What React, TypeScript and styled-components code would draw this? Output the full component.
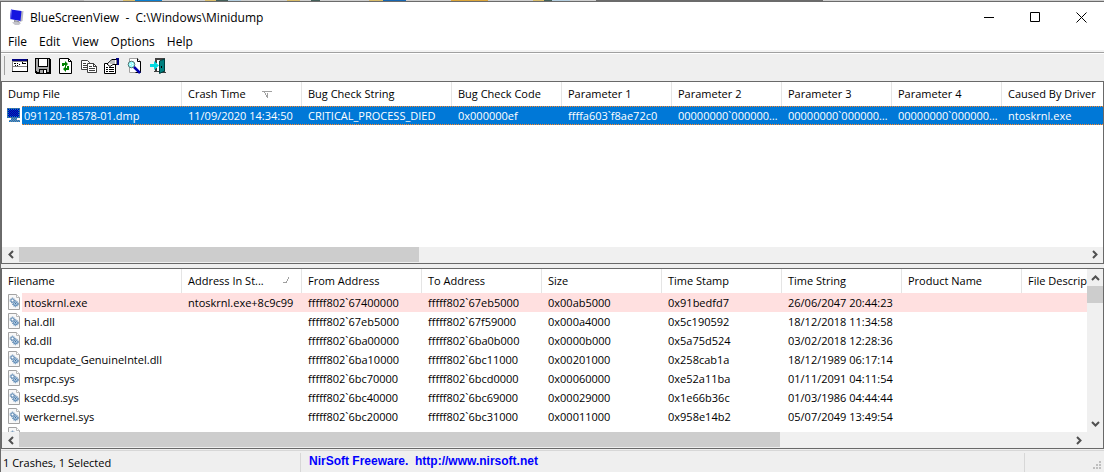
import React from "react";
import styled, { createGlobalStyle, css } from "styled-components";

const GlobalStyle = createGlobalStyle`
  * { box-sizing: border-box; }
  html, body { margin: 0; height: 100%; overflow: hidden; }
  #root { height: 100%; }
  body, button { font-family: "Open Sans", "Liberation Sans", sans-serif; font-size: 11px; color: #000; }
  button { border: 0; padding: 0; background: none; }
`;

const Desktop = styled.div`
  display: flex;
  flex-direction: column;
  height: 100vh;
  padding-left: 1px;
  background: #6b6b6b;
`;

const DesktopEdge = styled.div`
  flex: none;
  height: 2px;
  margin-left: -1px;
  border-bottom: 1px solid #6b6b6b;
  background: linear-gradient(to right,
    #b8b8b8 84px, #cfcfcf 84px 123px, #d9bd6c 123px 135px, #0a7fd0 135px 162px,
    #cfcfcf 162px 205px, #d9bd6c 205px 216px, #44605a 216px 228px, #b5cfe0 228px 241px,
    #cfcfcf 241px 287px, #d9bd6c 287px 300px, #cfcfcf 300px 311px, #44605a 311px 320px,
    #cfcfcf 320px 369px, #d9bd6c 369px 383px, #1766b0 383px 406px,
    #cfcfcf 406px 451px, #dca63a 451px 488px,
    #cfcfcf 488px 533px, #d9bd6c 533px 544px, #44605a 544px 552px, #b5cfe0 552px 570px,
    #cfcfcf 570px 596px, #6b6b6b 596px 823px, #cfcfcf 823px);
`;

const Window = styled.main`
  flex: 1;
  min-height: 0;
  display: flex;
  flex-direction: column;
  background: #efefef;
`;

const TitleBar = styled.header`
  display: flex;
  align-items: center;
  height: 30px;
  padding-left: 8px;
  background: #fff;
`;

const Title = styled.h1`
  flex: 1;
  margin: 0 0 0 4px;
  font-size: 12px;
  font-weight: 400;
  white-space: pre;
`;

const WindowButton = styled.button`
  display: flex;
  align-items: center;
  justify-content: center;
  width: 46px;
  height: 30px;
`;

const MenuBar = styled.nav`
  display: flex;
  align-items: flex-start;
  height: 20px;
  padding-left: 1px;
  border-bottom: 2px solid #f3f3f3;
  background: #fff;
`;

const MenuItem = styled.button`
  height: 20px;
  padding: 0 6px;
  font-size: 12px;
  line-height: 20px;
`;

const ToolBar = styled.div`
  display: flex;
  align-items: center;
  gap: 7px;
  height: 29px;
  padding: 0 0 3px 3px;
  border-top: 1px solid #a0a0a0;
  box-shadow: inset 0 1px #fff;
`;

const Grip = styled.span`
  width: 1px;
  height: 19px;
  background: #a0a0a0;
`;

const ToolButton = styled.button`
  width: 16px;
  height: 16px;
  svg { display: block; }
`;

const Pane = styled.section<{ $share: number }>`
  flex: ${(p) => p.$share} 1 0;
  min-height: 0;
  display: grid;
  grid-template-columns: minmax(0, 1fr) auto;
  grid-template-rows: minmax(0, 1fr) 16px;
  border: 1px solid #696969;
  background: #fff;
`;

const Splitter = styled.div`
  height: 4px;
`;

const ListView = styled.div`
  min-width: 0;
  overflow: hidden;
`;

const Table = styled.table`
  width: 100%;
  table-layout: fixed;
  border-collapse: separate;
  border-spacing: 0;
`;

const HeadCell = styled.th`
  height: 24px;
  padding: 0 6px;
  overflow: hidden;
  border-right: 1px solid #e5e5e5;
  font-weight: 400;
  text-align: left;
  white-space: nowrap;
  &:last-child { border-right: 0; padding-right: 0; }
`;

const HeadLabel = styled.span`
  display: flex;
  align-items: center;
  gap: 16px;
  height: 16px;
  line-height: 16px;
`;

type Tone = "selected" | "culprit" | "plain";

const dots = "repeating-linear-gradient(to right, #ff8728 0 1px, #0078d7 1px 2px)";

const toneStyle = (tone: Tone) =>
  tone === "selected"
    ? css`
        background: ${dots} top / 100% 1px no-repeat, ${dots} bottom / 100% 1px no-repeat, #0078d7;
        color: #fff;
      `
    : css`
        background: ${tone === "culprit" ? "#ffe0e0" : "#fff"};
      `;

const Cell = styled.td<{ $tone: Tone }>`
  height: 19px;
  padding: 0 4px 0 6px;
  overflow: hidden;
  text-overflow: ellipsis;
  white-space: nowrap;
  line-height: 19px;
  ${(p) => toneStyle(p.$tone)}
`;

const NameCell = styled.td`
  height: 19px;
  padding: 0;
`;

const NameLayout = styled.div`
  display: flex;
`;

const NameIcon = styled.span`
  width: 20px;
  height: 19px;
  padding: 1px 0 0 5px;
  svg { display: block; }
`;

const NameText = styled.span<{ $tone: Tone }>`
  flex: 1;
  height: 19px;
  padding-left: 2px;
  line-height: 19px;
  white-space: nowrap;
  ${(p) => toneStyle(p.$tone)}
`;

const Bar = styled.div<{ $vertical?: boolean }>`
  display: flex;
  flex-direction: ${(p) => (p.$vertical ? "column" : "row")};
  width: ${(p) => (p.$vertical ? "16px" : "auto")};
  background: #f0f0f0;
`;

const ArrowButton = styled.button<{ $vertical?: boolean }>`
  flex: none;
  display: flex;
  align-items: center;
  justify-content: center;
  width: ${(p) => (p.$vertical ? "16px" : "17px")};
  height: ${(p) => (p.$vertical ? "17px" : "16px")};
`;

const Track = styled.div`
  flex: 1;
  display: flex;
`;

const Thumb = styled.div<{ $size: string; $vertical?: boolean }>`
  width: ${(p) => (p.$vertical ? "100%" : p.$size)};
  height: ${(p) => (p.$vertical ? p.$size : "15px")};
  background: #cdcdcd;
`;

const Corner = styled.div`
  background: #f0f0f0;
`;

const StatusBar = styled.footer`
  display: grid;
  grid-template-columns: 300px 1fr 79px;
  height: 23px;
  padding-top: 3px;
  border-top: 1px solid #efefef;
  box-shadow: inset 0 1px #d7d7d7;
`;

const StatusPart = styled.div`
  display: flex;
  align-items: center;
  padding-left: 2px;
  border-right: 1px solid #d7d7d7;
  &:last-child { border-right: 0; align-items: flex-end; justify-content: flex-end; }
`;

const NirSoftLink = styled.a`
  align-self: flex-start;
  padding-left: 6px;
  font: bold 12px/16px "Liberation Sans", sans-serif;
  color: #0000ff;
  text-decoration: none;
  white-space: pre;
`;

const arrowPaths = {
  left: "M8 2 4.500 5.500 8 9",
  right: "M4 2 7.500 5.500 4 9",
  up: "M2 8 5.500 4.500 9 8",
  down: "M2 4 5.500 7.500 9 4",
};

type Direction = keyof typeof arrowPaths;

const Arrow = ({ to }: { to: Direction }) => (
  <svg width="11" height="11" viewBox="0 0 11 11" fill="none" stroke="#505050" strokeWidth="2">
    <path d={arrowPaths[to]} />
  </svg>
);

const HorizontalBar = ({ size }: { size: string }) => (
  <Bar>
    <ArrowButton aria-label="Scroll left"><Arrow to="left" /></ArrowButton>
    <Track><Thumb $size={size} /></Track>
    <ArrowButton aria-label="Scroll right"><Arrow to="right" /></ArrowButton>
  </Bar>
);

const MonitorIcon = () => (
  <svg width="17" height="17" viewBox="0 0 17 17">
    <path d="M11.500 2.500 14.500 2 13.500 12 11 13Z" fill="#b9b9c2" />
    <path d="M2 .5 12.500 2 11.500 12 1 10Z" fill="#1414e0" />
    <path d="M2 .5 1 10 2 10.200 3 .7Z" fill="#6c6cec" />
    <path d="M5 11 10 12 11 14 5 14Z" fill="#92929a" />
    <path d="M3 13.500 7 12.500 12 14 10 16 6 16Z" fill="#c4c4cb" />
  </svg>
);

const DumpIcon = () => (
  <svg width="15" height="16" viewBox="0 0 15 16" shapeRendering="crispEdges">
    <defs>
      <pattern id="dither" width="2" height="2" patternUnits="userSpaceOnUse">
        <path d="M0 0h1v1H0zM1 1h1v1H1z" fill="#0078d7" />
      </pattern>
    </defs>
    <path d="M0 1h13v10H0z" fill="#6a6a78" />
    <path d="M1 2h11v8H1z" fill="#0000a8" />
    <path d="M4 11h6v2h3v2H2v-2h2z" fill="#8a8a90" />
    <path d="M0 1h13v10H10v2h3v2H2v-2h2v-2H0z" fill="url(#dither)" />
    <path d="M2 3h9v6H2z" fill="#0000a8" opacity=".6" />
  </svg>
);

const FileIcon = () => (
  <svg width="14" height="17" viewBox="0 0 14 17">
    <path d="M1.500 .5H9.500L12.500 3.500V15.500H1.500Z" fill="#f8f8f8" stroke="#a3a3a3" />
    <path d="M9.500 .5V3.500H12.500" fill="#fff" stroke="#b8b8b8" />
    <circle cx="5.500" cy="6.500" r="2.400" fill="none" stroke="#3e6f9f" strokeWidth="1" strokeDasharray="1 .9" />
    <circle cx="5.500" cy="6.500" r="1.500" fill="#fff" stroke="#4d7eae" strokeWidth="1" />
    <circle cx="8.500" cy="9.800" r="2.900" fill="#e4eef7" stroke="#3e6f9f" strokeWidth="1" strokeDasharray="1 .9" />
    <circle cx="8.500" cy="9.800" r="1.900" fill="#c6dbed" stroke="#4d7eae" strokeWidth="1" />
    <path d="M8 9.300h1v1H8z" fill="#1d4f85" />
  </svg>
);

const toolIcons: { label: string; art: React.ReactNode }[] = [
  {
    label: "Advanced options",
    art: (
      <>
        <path d="M0 1h16v13H0z" fill="#000" />
        <path d="M0 1h15v12H0z" fill="#808080" />
        <path d="M1 4h14v9H1z" fill="#fff" />
        <path d="M0 1h15v2H0z" fill="#000080" />
        <path d="M2 5h2v1H2zM5 5h1v1H5zM10 5h4v1h-4zM3 7h1v1H3zM5 7h1v1H5zM7 6h1v1H7zM10 4h1v1h-1z" fill="#000" />
        <path d="M1 8h14v1H1z" fill="#808080" />
      </>
    ),
  },
  {
    label: "Save selected items",
    art: (
      <>
        <path d="M0 0h15v1h1v15H1v-1H0z" fill="#000" />
        <path d="M1 1h2v8h10V1h1v13H2v-1H1z" fill="#a8a8a8" />
        <path d="M4 1h8v7H4z" fill="#fff" />
        <path d="M4 11h8v4H4z" fill="#000" />
        <path d="M5 12h3v3H5z" fill="#a8a8a8" />
        <path d="M9 12h2v3H9z" fill="#fff" />
      </>
    ),
  },
  {
    label: "Refresh",
    art: (
      <>
        <path d="M1.500 .5h9l3 3v12h-12z" fill="#fff" stroke="#000" />
        <path d="M10.500 .5v3h3" fill="none" stroke="#000" />
        <path d="M4 8V5h3V3l3 3-3 3V7H6v1zM11 8v4H8v2l-3-3 3-3v2h1V8z" fill="#008000" />
      </>
    ),
  },
  {
    label: "Copy selected items",
    art: (
      <>
        <path d="M.5 2.500h6l2 2v7h-8z" fill="#fff" stroke="#404040" />
        <path d="M2 5h3v1H2zM2 7h5v1H2zM2 9h4v1H2z" fill="#404040" />
        <path d="M6.500 5.500h6l3 3v6h-9z" fill="#fff" stroke="#404040" />
        <path d="M12 5h1v3h3v1h-4zM8 8h3v1H8zM8 10h6v1H8zM8 12h6v1H8z" fill="#404040" />
      </>
    ),
  },
  {
    label: "Properties",
    art: (
      <>
        <path d="M.5 5.500h11v10h-11z" fill="#fff" stroke="#000" />
        <path d="M2 9h2v1H2zM5 9h5v1H5zM2 11h2v1H2zM5 11h5v1H5zM2 13h2v1H2zM5 13h5v1H5z" fill="#000" />
        <path d="M3 6 8 1.500h5v5H9l-3 2z" fill="#fff" stroke="#000" />
        <path d="M6 5h5M7 3h4" stroke="#808080" />
        <path d="M12 0h3v7h-2V2h-1z" fill="#000080" />
      </>
    ),
  },
  {
    label: "Find",
    art: (
      <>
        <path d="M2.500 .5h8l3 3v11h-11z" fill="#fff" stroke="#a0a0a0" />
        <path d="M10.500 .5v3h3v11h-5" fill="none" stroke="#000" />
        <circle cx="4.500" cy="6.500" r="3.300" fill="#9ff" stroke="#507070" />
        <path d="M3 6h1v1H3zM5 5h1v1H5zM5 7h1v1H5z" fill="#fff" />
        <path d="M7 9 13 15" stroke="#0000b0" strokeWidth="2.500" />
      </>
    ),
  },
  {
    label: "Exit",
    art: (
      <>
        <path d="M5 0h10v14h1v1H9v-1h4V2H7v3H5zM5 10h2v3h2v1H4v-1h1z" fill="#404040" />
        <path d="M7 2h3v11H7z" fill="#fff" />
        <path d="M9.500 3 14.500 1v12l-5 2.500z" fill="#008080" stroke="#003c3c" />
        <path d="M0 6h4V3l5 4.500L4 12V9H0z" fill="#00d8e0" />
        <path d="M11 8h1v2h-1z" fill="#000" />
      </>
    ),
  },
];

const SortMark = ({ descending }: { descending?: boolean }) => (
  <svg width="10" height="9" viewBox="0 0 10 9" fill="#a0a0a0">
    {descending ? (
      <path d="M0 1h10v1H0zM2 2h1v1H2zM3 3h1v2H3zM4 5h1v2H4zM5 3h1v5H5z" />
    ) : (
      <path d="M3 6h4v1H3zM6 5h1v1H6zM7 3h1v2H7zM8 1h1v2H8z" />
    )}
  </svg>
);

const crashColumns = [
  { name: "Dump File", width: 180 },
  { name: "Crash Time", width: 120 },
  { name: "Bug Check String", width: 150 },
  { name: "Bug Check Code", width: 110 },
  { name: "Parameter 1", width: 110 },
  { name: "Parameter 2", width: 110 },
  { name: "Parameter 3", width: 110 },
  { name: "Parameter 4", width: 110 },
  { name: "Caused By Driver", width: 0 },
];

const crash = [
  "091120-18578-01.dmp", "11/09/2020 14:34:50", "CRITICAL_PROCESS_DIED", "0x000000ef",
  "ffffa603`f8ae72c0", "00000000`00000000", "00000000`00000000", "00000000`00000000", "ntoskrnl.exe",
];

const driverColumns = [
  { name: "Filename", width: 180 },
  { name: "Address In St...", width: 120 },
  { name: "From Address", width: 120 },
  { name: "To Address", width: 120 },
  { name: "Size", width: 120 },
  { name: "Time Stamp", width: 120 },
  { name: "Time String", width: 120 },
  { name: "Product Name", width: 120 },
  { name: "File Description", width: 0 },
];

const drivers = [
  ["ntoskrnl.exe", "ntoskrnl.exe+8c9c99", "fffff802`67400000", "fffff802`67eb5000", "0x00ab5000", "0x91bedfd7", "26/06/2047 20:44:23", "", ""],
  ["hal.dll", "", "fffff802`67eb5000", "fffff802`67f59000", "0x000a4000", "0x5c190592", "18/12/2018 11:34:58", "", ""],
  ["kd.dll", "", "fffff802`6ba00000", "fffff802`6ba0b000", "0x0000b000", "0x5a75d524", "03/02/2018 12:28:36", "", ""],
  ["mcupdate_GenuineIntel.dll", "", "fffff802`6ba10000", "fffff802`6bc11000", "0x00201000", "0x258cab1a", "18/12/1989 06:17:14", "", ""],
  ["msrpc.sys", "", "fffff802`6bc70000", "fffff802`6bcd0000", "0x00060000", "0xe52a11ba", "01/11/2091 04:11:54", "", ""],
  ["ksecdd.sys", "", "fffff802`6bc40000", "fffff802`6bc69000", "0x00029000", "0x1e66b36c", "01/03/1986 04:44:44", "", ""],
  ["werkernel.sys", "", "fffff802`6bc20000", "fffff802`6bc31000", "0x00011000", "0x958e14b2", "05/07/2049 13:49:54", "", ""],
  ["", "", "", "", "", "", "", "", ""],
];

interface ListProps {
  label: string;
  columns: { name: string; width: number }[];
  rows: string[][];
  icon: React.ReactNode;
  firstTone: Tone;
  descending?: boolean;
}

const List = ({ label, columns, rows, icon, firstTone, descending }: ListProps) => (
  <ListView>
    <Table aria-label={label}>
      <colgroup>
        {columns.map((c) => <col key={c.name} width={c.width || undefined} />)}
      </colgroup>
      <thead>
        <tr>
          {columns.map((c, i) => (
            <HeadCell key={c.name} scope="col">
              <HeadLabel>{c.name}{i === 1 && <SortMark descending={descending} />}</HeadLabel>
            </HeadCell>
          ))}
        </tr>
      </thead>
      <tbody>
        {rows.map(([name, ...values], r) => {
          const tone: Tone = r === 0 ? firstTone : "plain";
          return (
            <tr key={r}>
              <NameCell>
                <NameLayout>
                  <NameIcon>{icon}</NameIcon>
                  <NameText $tone={tone}>{name}</NameText>
                </NameLayout>
              </NameCell>
              {values.map((v, i) => <Cell key={i} $tone={tone}>{v}</Cell>)}
            </tr>
          );
        })}
      </tbody>
    </Table>
  </ListView>
);

export default function App() {
  return (
    <>
      <GlobalStyle />
      <Desktop>
        <DesktopEdge />
        <Window>
          <TitleBar>
            <MonitorIcon />
            <Title>{"BlueScreenView  -  C:\\Windows\\Minidump"}</Title>
            <WindowButton aria-label="Minimize">
              <svg width="11" height="11"><path d="M0 5.500h10" stroke="#000" /></svg>
            </WindowButton>
            <WindowButton aria-label="Maximize">
              <svg width="11" height="11"><path d="M.5 .5h9v9h-9z" fill="none" stroke="#000" /></svg>
            </WindowButton>
            <WindowButton aria-label="Close">
              <svg width="11" height="11"><path d="M.5 .5l10 10M10.500 .5l-10 10" stroke="#000" /></svg>
            </WindowButton>
          </TitleBar>
          <MenuBar>
            {["File", "Edit", "View", "Options", "Help"].map((m) => <MenuItem key={m}>{m}</MenuItem>)}
          </MenuBar>
          <ToolBar>
            <Grip />
            {toolIcons.map((t) => (
              <ToolButton key={t.label} aria-label={t.label}>
                <svg width="16" height="16" viewBox="0 0 16 16">{t.art}</svg>
              </ToolButton>
            ))}
          </ToolBar>
          <Pane $share={183}>
            <List label="Crashes" columns={crashColumns} rows={[crash]} icon={<DumpIcon />} firstTone="selected" descending />
            <span />
            <HorizontalBar size="37.5%" />
          </Pane>
          <Splitter />
          <Pane $share={181}>
            <List label="Drivers" columns={driverColumns} rows={drivers} icon={<FileIcon />} firstTone="culprit" />
            <Bar $vertical>
              <ArrowButton $vertical aria-label="Scroll up"><Arrow to="up" /></ArrowButton>
              <Track><Thumb $vertical $size="17px" /></Track>
              <ArrowButton $vertical aria-label="Scroll down"><Arrow to="down" /></ArrowButton>
            </Bar>
            <HorizontalBar size="72.4%" />
            <Corner />
          </Pane>
          <StatusBar>
            <StatusPart>1 Crashes, 1 Selected</StatusPart>
            <StatusPart>
              <NirSoftLink href="http://www.nirsoft.net">{"NirSoft Freeware.  http://www.nirsoft.net"}</NirSoftLink>
            </StatusPart>
            <StatusPart>
              <svg width="11" height="11" fill="#bfbfbf">
                <path d="M6 0h2v2H6zM6 3h2v2H6zM3 3h2v2H3zM6 6h2v2H6zM3 6h2v2H3zM0 6h2v2H0z" />
              </svg>
            </StatusPart>
          </StatusBar>
        </Window>
      </Desktop>
    </>
  );
}
